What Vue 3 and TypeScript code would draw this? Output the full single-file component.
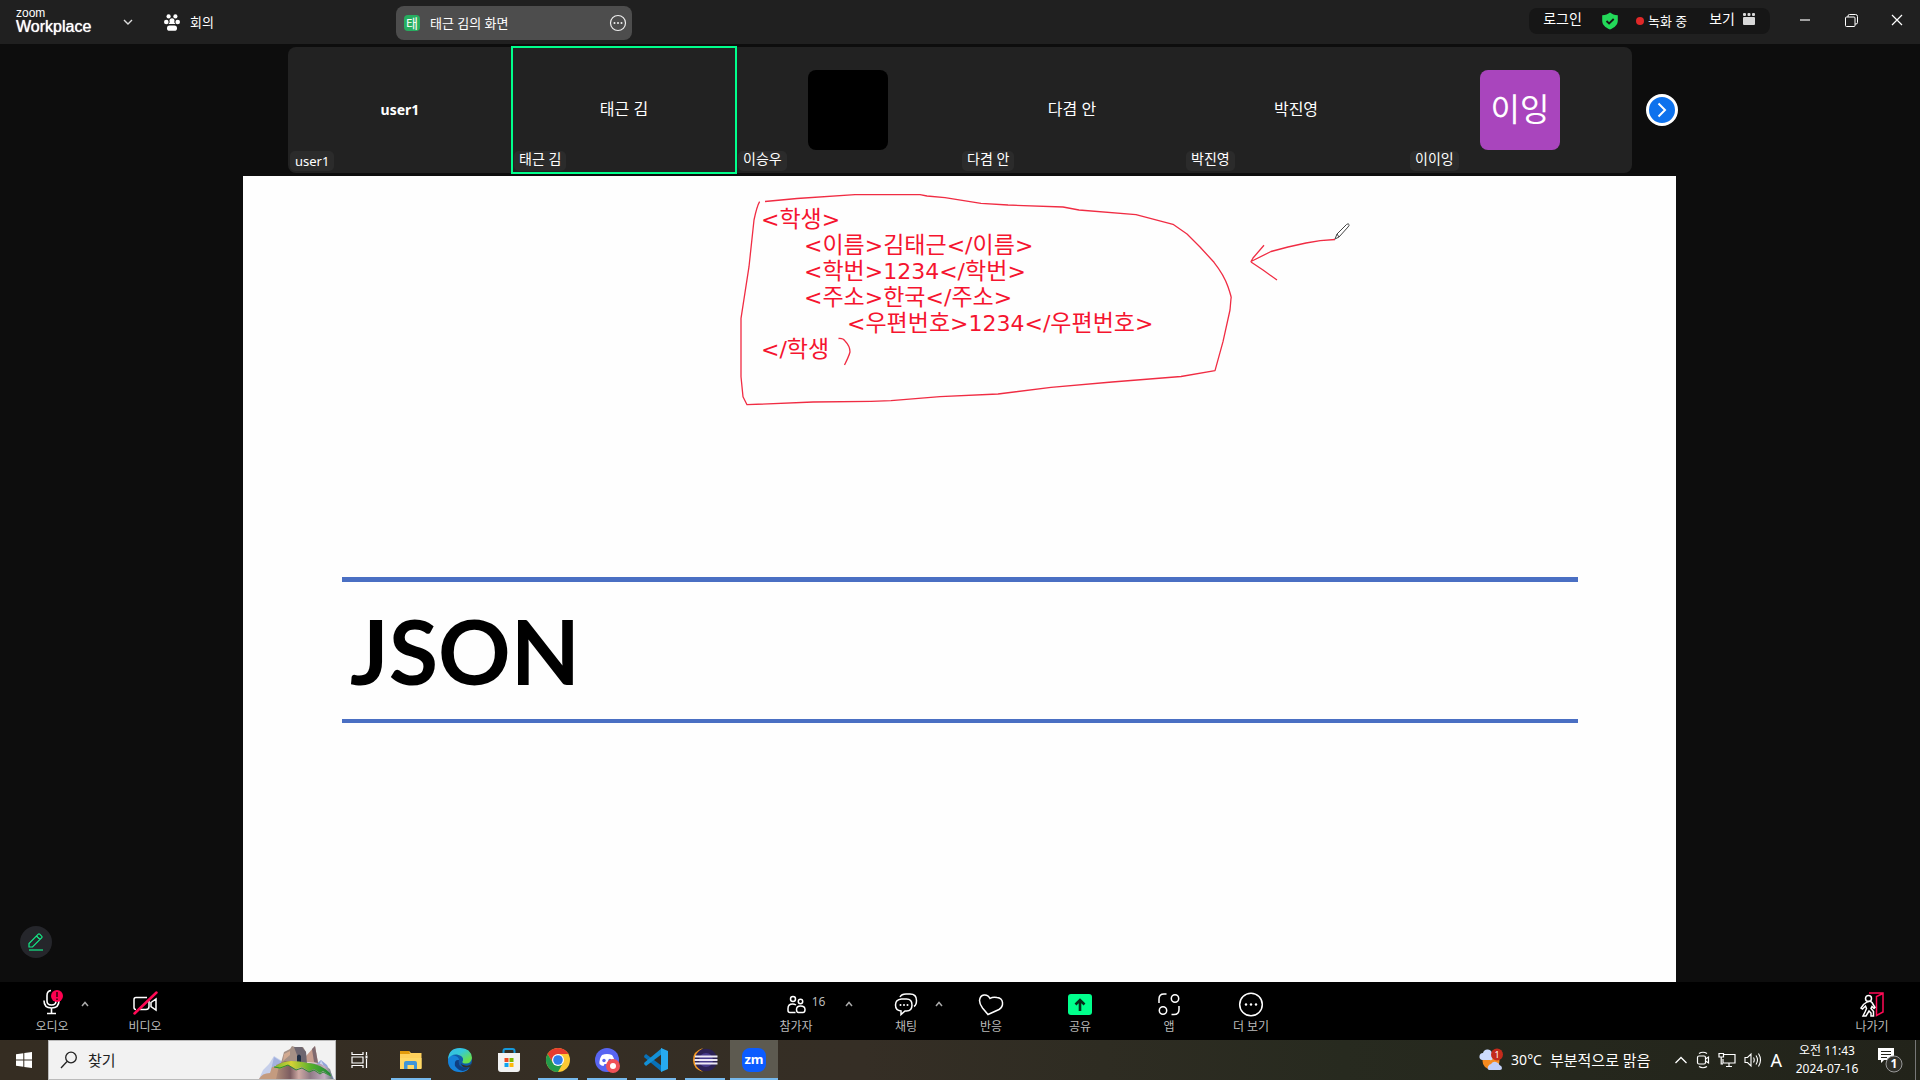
<script setup lang="ts">
interface Participant {
  name: string
  latin?: boolean
  avatar?: 'blank' | 'initials'
  initials?: string
  active?: boolean
}

interface CodeLine {
  depth: number
  text: string
}

const participants: Participant[] = [
  { name: 'user1', latin: true },
  { name: '태근 김', active: true },
  { name: '이승우', avatar: 'blank' },
  { name: '다겸 안' },
  { name: '박진영' },
  { name: '이이잉', avatar: 'initials', initials: '이잉' },
]

const codeLines: CodeLine[] = [
  { depth: 0, text: '<학생>' },
  { depth: 1, text: '<이름>김태근</이름>' },
  { depth: 1, text: '<학번>1234</학번>' },
  { depth: 1, text: '<주소>한국</주소>' },
  { depth: 2, text: '<우편번호>1234</우편번호>' },
  { depth: 0, text: '</학생' },
]

// Hangul runs are set slightly larger than the Latin marks around them.
const runs = (text: string) =>
  (text.match(/[가-힣]+|[^가-힣]+/g) ?? []).map((t) => ({ t, hangul: /[가-힣]/.test(t) }))
</script>

<template>
  <div class="app">
    <header class="titlebar">
      <div class="brand">
        <span class="brand-small">zoom</span>
        <span class="brand-big">Workplace</span>
      </div>
      <button class="brand-menu" aria-label="메뉴">
        <svg width="10" height="8" viewBox="0 0 10 8"><path d="M1 2l4 4 4-4" fill="none" stroke="#ddd" stroke-width="1.4" /></svg>
      </button>
      <div class="meeting">
        <svg width="16" height="17" viewBox="0 0 16 17" fill="#fff">
          <circle cx="4.600" cy="2.400" r="2.100" /><circle cx="11.400" cy="2.400" r="2.100" />
          <circle cx="2.300" cy="8" r="2.300" /><circle cx="13.700" cy="8" r="2.300" />
          <circle cx="8" cy="6.800" r="2.500" /><path d="M4.500 10h7l-1.500-2h-4z" />
          <rect x="3" y="11.500" width="10" height="5.300" rx="2.600" />
        </svg>
        <span>회의</span>
      </div>
      <div class="share-tab">
        <span class="tab-badge">태</span>
        <span class="tab-title">태근 김의 화면</span>
        <button aria-label="옵션">
          <svg width="18" height="18" viewBox="0 0 18 18"><circle cx="9" cy="9" r="7.500" fill="none" stroke="#eee" stroke-width="1.200" /><g fill="#eee"><circle cx="5.500" cy="9" r="1" /><circle cx="9" cy="9" r="1" /><circle cx="12.500" cy="9" r="1" /></g></svg>
        </button>
      </div>
      <div class="status">
        <button class="login">로그인</button>
        <svg class="shield" width="16" height="18" viewBox="0 0 16 18"><path d="M8 0.500c2 1.700 4.500 2.600 7.800 2.700v5.300c0 4.300-3 7-7.800 9-4.800-2-7.800-4.700-7.800-9V3.200C3.500 3.100 6 2.200 8 .5z" fill="#23d959" /><path d="M4.500 9l2.600 2.500L11.700 7" fill="none" stroke="#161616" stroke-width="1.800" /></svg>
        <span class="recording"><i class="dot"></i>녹화 중</span>
        <button class="view">보기
          <svg width="12" height="12" viewBox="0 0 12 12" fill="#d8d8d8"><rect x="0" y="0" width="3" height="3" rx="1" /><rect x="4.500" y="0" width="3" height="3" rx="1" /><rect x="9" y="0" width="3" height="3" rx="1" /><rect x="0" y="4" width="12" height="8" rx="1" /></svg>
        </button>
      </div>
      <div class="window-controls">
        <button aria-label="최소화"><svg width="12" height="12" viewBox="0 0 12 12"><path d="M1 6h10" stroke="#ccc" stroke-width="1.500" /></svg></button>
        <button aria-label="이전 크기로"><svg width="13" height="13" viewBox="0 0 13 13" fill="none" stroke="#fff"><path d="M3 3V2q0-1.500 1.500-1.500h6q2 0 2 2v6q0 1.500-1.500 1.500h-1" /><rect x="0.500" y="3" width="9.500" height="9.500" rx="1" /></svg></button>
        <button aria-label="닫기"><svg width="12" height="12" viewBox="0 0 12 12"><path d="M1 1l10 10M11 1L1 11" stroke="#fff" stroke-width="1.200" /></svg></button>
      </div>
    </header>

    <section class="gallery">
      <ul class="strip">
        <li v-for="p in participants" :key="p.name" class="tile" :class="{ active: p.active, latin: p.latin }">
          <span v-if="p.avatar" class="avatar" :class="p.avatar">{{ p.initials }}</span>
          <span v-else class="tile-name">{{ p.name }}</span>
          <span class="tile-label">{{ p.name }}</span>
        </li>
      </ul>
      <button class="next" aria-label="다음">
        <svg width="10" height="16" viewBox="0 0 10 16"><path d="M1.500 1.500L8 8l-6.500 6.500" fill="none" stroke="#fff" stroke-width="2" /></svg>
      </button>
    </section>

    <main class="stage">
      <button class="annotate" aria-label="주석">
        <svg width="16" height="18" viewBox="0 0 16 18" fill="none" stroke="#15e987" stroke-width="1.200"><path d="M1 17h14" /><path d="M1 14v-3.500L10.300 1.200q.7-.7 1.400 0l2.100 2.100q.7.700 0 1.400L4.500 14zM8.500 3l3.500 3.500" /></svg>
      </button>
      <div class="slide">
        <div class="code">
          <div v-for="(line, i) in codeLines" :key="i" class="code-line" :class="'depth-' + line.depth"><span v-for="(r, j) in runs(line.text)" :key="j" :class="{ hangul: r.hangul }">{{ r.t }}</span></div>
        </div>
        <h1 class="title">JSON</h1>
        <svg class="ink" width="1433" height="806" viewBox="0 0 1433 806" fill="none" stroke="#f02c43" stroke-width="1.300" stroke-linejoin="round">
          <path d="M522 25.500L554 22.500 612 18.700H677L684 20 702 21.700 738 27.300 765 29 820 31 836 34 893 38.700 930 48.300 944 58 957 71 971 86.300Q981 99 985 110.700T988 122.500L987 134 980 165.700 972 194.700 938 200.500 869 206 808 211.300 755 218 697 220.700 648 224.700 628 225.300 570 226 504 228.700 500 220.700 498 200.700V142.300L506 90.700 511 44Q514 30 516.600 25.700" />
          <path d="M1092 63.500Q1077 64 1063 67L1045 71 1028 75.500 1008 85.500 1010 82 1021 69.300M1008 86L1020 94 1034 104" />
          <path d="M595.500 162.500Q600 162 602 165 607 170 607 176 606 180 601.500 189" />
          <g stroke="#444" stroke-width="1"><path d="M1092 63l2-5 9.500-9.500q2-1.500 2.500 0 .5 1-1 2.500L1096 61zM1094 58l2 3" fill="#fff" /></g>
        </svg>
      </div>
    </main>

    <nav class="toolbar">
      <div class="tools-left">
        <button class="tool">
          <svg width="24" height="26" viewBox="0 0 24 26" fill="none" stroke="#fff" stroke-width="1.600"><path d="M11 1.500q-4 .5-4 5V12q0 4 4.500 4t4.500-4v-1M4 11.500q0 7.500 7.500 7.500t7.500-7.500M11.500 19v5M7 24.500h9" /><circle cx="17" cy="7" r="6" fill="#ff0050" stroke="none" /><path d="M17 3v5M17 9.500v1.500" stroke="#40000f" /></svg>
          <span>오디오</span>
        </button>
        <button class="caret" aria-label="오디오 옵션"><svg width="8" height="6" viewBox="0 0 8 6"><path d="M1 5l3-3.500L7 5" fill="none" stroke="#aaa" stroke-width="1.500" /></svg></button>
        <button class="tool video">
          <svg width="26" height="26" viewBox="0 0 26 26" fill="none" stroke="#fff" stroke-width="1.500"><path d="M15 8.500H4q-2 0-2 2v8q0 2 2 2M8 20.500h6q3 0 3-3V12M19 13.500l5-3.500v11l-5-3.500z" /><path d="M2.500 24.500L24.500 3.500" stroke="#ff0a55" stroke-width="2.500" stroke-linecap="round" /></svg>
          <span>비디오</span>
        </button>
      </div>
      <div class="tools-center">
        <button class="tool people">
          <span class="with-count">
            <svg width="19" height="26" viewBox="0 0 19 26" fill="none" stroke="#fff" stroke-width="1.500"><circle cx="6" cy="8" r="2.500" /><circle cx="13.500" cy="10.500" r="2.200" /><path d="M8.500 21.500H3q-2 0-2-2v-2q0-4.500 4.500-4.500 2 0 3.500 1M13.500 15q-4 0-4 3.500 0 3 2 3h4.500q2 0 2-3Q18 15 13.500 15z" /></svg>
            <small>16</small>
          </span>
          <span>참가자</span>
        </button>
        <button class="caret after-people" aria-label="참가자 옵션"><svg width="8" height="6" viewBox="0 0 8 6"><path d="M1 5l3-3.500L7 5" fill="none" stroke="#aaa" stroke-width="1.500" /></svg></button>
        <button class="tool">
          <svg width="24" height="26" viewBox="0 0 24 26" fill="none" stroke="#fff" stroke-width="1.500"><path d="M6 6q1.500-3 6-3h4q6.500 0 6.500 6.500 0 4.500-2.500 6" /><path d="M7.500 8h5q5.500 0 5.500 6t-5.500 6H11l-4 3.500V20Q1.500 19.500 1.500 14t6-6z" /><g fill="#fff" stroke="none"><circle cx="6.500" cy="14" r="1" /><circle cx="10" cy="14" r="1" /><circle cx="13.500" cy="14" r="1" /></g></svg>
          <span>채팅</span>
        </button>
        <button class="caret after-chat" aria-label="채팅 옵션"><svg width="8" height="6" viewBox="0 0 8 6"><path d="M1 5l3-3.500L7 5" fill="none" stroke="#aaa" stroke-width="1.500" /></svg></button>
        <button class="tool">
          <svg width="26" height="26" viewBox="0 0 26 26" fill="none" stroke="#fff" stroke-width="1.500"><path d="M12 7.500Q10 3.500 6 4T1.500 9.500q0 3.500 3 7.500L10 23.500l11-5Q25 16 24.500 11.500T19 6.500Q15 5.500 12 7.500z" /></svg>
          <span>반응</span>
        </button>
        <button class="tool wide-gap">
          <svg width="26" height="26" viewBox="0 0 26 26"><rect x="1" y="3" width="24" height="21" rx="3" fill="#00ff8c" /><path d="M13 20v-11M8.500 13.500L13 9l4.500 4.500" fill="none" stroke="#062a18" stroke-width="2.600" /></svg>
          <span>공유</span>
        </button>
        <button class="tool wide-gap">
          <svg width="26" height="26" viewBox="0 0 26 26" fill="none" stroke="#fff" stroke-width="1.500"><circle cx="19" cy="7.500" r="3.700" /><circle cx="7" cy="19.500" r="3.700" /><path d="M3 12V8q0-5 5-5h2.500M15.500 23.500H18q5 0 5-5v-3.500" /></svg>
          <span>앱</span>
        </button>
        <button class="tool more">
          <svg width="26" height="26" viewBox="0 0 26 26"><circle cx="13" cy="13.500" r="11.300" fill="none" stroke="#fff" stroke-width="1.500" /><g fill="#fff"><circle cx="8" cy="13.500" r="1.200" /><circle cx="13" cy="13.500" r="1.200" /><circle cx="18" cy="13.500" r="1.200" /></g></svg>
          <span>더 보기</span>
        </button>
      </div>
      <div class="tools-right">
        <button class="tool">
          <svg width="26" height="26" viewBox="0 0 26 26" fill="none" stroke="#fff" stroke-width="1.500"><path d="M10 2h14v19l-6.500 3.500V5.500L24 2.500" stroke="#ff0a55" /><circle cx="9.500" cy="7.500" r="3" fill="#000" /><path d="M8 11l-3.500 2.500L2 17l1.500 1 3-3 1 2.500-1.500 3.500L4 25h3l3-5 2 2v3h2.500v-4.500l-2.500-3 1-2 2 2 1-1-3-5q-2-2-5-.5z" /></svg>
          <span>나가기</span>
        </button>
      </div>
    </nav>

    <footer class="taskbar">
      <button class="start" aria-label="시작"><svg width="16" height="16" viewBox="0 0 16 16" fill="#fff"><path d="M0 2.200L7.300 1.200v6.300H0zM8.300 1L16 0v7.500H8.300zM0 8.500h7.300v6.300L0 13.800zM8.300 8.500H16V16l-7.700-1z" /></svg></button>
      <label class="search">
        <svg class="lens" width="18" height="18" viewBox="0 0 18 18" fill="none" stroke="#222" stroke-width="1.300"><circle cx="11" cy="6.500" r="5.300" /><path d="M7 10.500L1 17" /></svg>
        <input type="text" placeholder="찾기" aria-label="찾기" />
        <svg class="castle" width="78" height="34" viewBox="0 2 78 34">
          <defs>
            <linearGradient id="rock" x1="0" y1="0" x2="1" y2="0"><stop offset="0" stop-color="#b08c78" /><stop offset="0.250" stop-color="#7b5c60" /><stop offset="0.400" stop-color="#cfaaa4" /><stop offset="0.600" stop-color="#8f7a86" /><stop offset="0.850" stop-color="#c3aec0" /><stop offset="1" stop-color="#667a7c" /></linearGradient>
            <linearGradient id="grass" x1="0" y1="0" x2="1" y2="0"><stop offset="0" stop-color="#71b82e" /><stop offset="0.300" stop-color="#d6d236" /><stop offset="0.650" stop-color="#55b02c" /><stop offset="1" stop-color="#1d873a" /></linearGradient>
          </defs>
          <path d="M2 36l4-9 6-6 5-8 8 5v18z" fill="#c6cfea" /><path d="M17 14l8 5-2 10-9-2z" fill="#a3b2de" />
          <path d="M58 22l6-5 6 5 4 8 3 6H58z" fill="#94a5da" /><path d="M64 17l-3 11 5 6 3-6z" fill="#ccd5f0" />
          <path d="M47 19l2-6 9-10 3 17z" fill="#c79d8e" /><path d="M55 6l3-3 3 17-4-1z" fill="#806a70" />
          <path d="M24 20l3-11 6-3 2-3 3 1 8 0 3 5 1 14-16 1z" fill="#a69186" /><path d="M37 4l8 0 4 5 1 13-8-1-2-9z" fill="#6e6670" /><path d="M27 11l6-3v4l-7 6z" fill="#d2aa91" />
          <path d="M40 20v-7q2-3 4 0v7z" fill="#1d2c42" />
          <path d="M19 36V22l9-4 36 3 9 5 3 10z" fill="url(#rock)" />
          <path d="M2 36q3-6 11-6l2-6 7-1-3 13z" fill="#c49b7f" />
          <path d="M17 24q9-6 17-6t17 2q13 1 22 10l1 3-8-5-3 2-6-4-5 2-7-4-6 2-8-4-8 4z" fill="url(#grass)" />
          <path d="M17 24l6 1 8-3 8 5 6-2 7 4 5-2 6 4 3-2 8 4" fill="none" stroke="#2f8a35" />
        </svg>
      </label>
      <button class="task-view" aria-label="작업 보기"><svg width="18" height="16" viewBox="0 0 18 16" fill="none" stroke="#fff" stroke-width="1.200"><path d="M1 0v2.500h11V0M1 16v-2.500h11V16M1 5h11v6H1zM15.500 0v3M15.500 7v9" /><rect x="14.500" y="3.500" width="2" height="3" fill="#fff" stroke="none" /></svg></button>
      <div class="apps">
        <button class="app-icon open" aria-label="파일 탐색기"><svg width="24" height="24" viewBox="0 0 24 24"><path d="M1 3h9l2 2h10.500v15H1z" fill="#ffd15c" /><path d="M1 3h9l1 3H1z" fill="#e39b0b" /><path d="M1 10h21.500v11H1z" fill="#ffd966" /><path d="M5 21v-6q0-2 2-2h9q2 0 2 2v6h-3v-4H8.500v4z" fill="#3f96d8" /></svg></button>
        <button class="app-icon" aria-label="엣지"><svg width="26" height="26" viewBox="0 0 26 26"><defs><linearGradient id="edge" x1="0" y1="0" x2="1" y2="1"><stop offset="0" stop-color="#36b9ea" /><stop offset="0.400" stop-color="#35c9d8" /><stop offset="0.800" stop-color="#67df50" /></linearGradient></defs><circle cx="13" cy="13" r="12" fill="#0f5caa" /><path d="M1 13Q1 7 7 8.500q5 1 5 4.500-3 4 1 7.500 4 3 9.500 0Q19 26 12 25 1 24 1 13z" fill="#1681d8" /><path d="M12 13q-2 9 10.500 7.500Q15 28 8 19q-1-7 4-6z" fill="#103e80" /><path d="M24 17q-2 2.500-6 1.500-3-.5-4-2 1 4 5 4 3 0 4.500-1z" fill="#352e25" /><path d="M1 12Q2 1 13 1q11 0 12 10-1 6-7 5.500-4-.5-2-3Q17 9 10 7.500 4 7 1 12z" fill="url(#edge)" /></svg></button>
        <button class="app-icon" aria-label="스토어"><svg width="26" height="26" viewBox="0 0 26 26"><path d="M7.500 7V4q0-2 2-2h7q2 0 2 2v3" fill="none" stroke="#1599dc" stroke-width="2" /><path d="M2 6h22v16q0 3-3 3H5q-3 0-3-3z" fill="#f2f2f2" /><path d="M8.500 11h4v4h-4z" fill="#ef4a23" /><path d="M13.500 11h4v4h-4z" fill="#7eb900" /><path d="M8.500 16h4v4h-4z" fill="#10a3ee" /><path d="M13.500 16h4v4h-4z" fill="#fdb80b" /></svg></button>
        <button class="app-icon open" aria-label="크롬"><svg width="26" height="26" viewBox="0 0 26 26"><circle cx="13" cy="13" r="12" fill="#fcc934" /><path d="M2.600 7A12 12 0 0 1 23.400 7H13L8 16z" fill="#e63b2e" /><path d="M2.600 7A12 12 0 0 0 13 25l5-9-10 0z" fill="#239a4b" /><circle cx="13" cy="13" r="6" fill="#fff" /><circle cx="13" cy="13" r="4.800" fill="#2f7de9" /></svg></button>
        <button class="app-icon open" aria-label="디스코드"><svg width="26" height="26" viewBox="0 0 26 26"><circle cx="13" cy="13" r="12" fill="#5865f2" /><path d="M8 8q5-2 10 0 3 4 2.500 9-2 2-4 2l-1-2h-5l-1 2q-2 0-4-2Q5 12 8 8z" fill="#fff" /><circle cx="10" cy="13.500" r="1.700" fill="#5865f2" /><circle cx="16" cy="13.500" r="1.700" fill="#5865f2" /><circle cx="19" cy="19" r="7" fill="#ef5158" /><circle cx="19" cy="19" r="3" fill="#fff" /></svg></button>
        <button class="app-icon open" aria-label="코드 편집기"><svg width="26" height="26" viewBox="0 0 26 26"><path d="M1 9l2-2 16 12v6L1.500 10.500z" fill="#0871b8" /><path d="M1 17l2 2L19 7V1L1.500 15.500z" fill="#1390d6" /><path d="M18 1l7 3v18l-7 3z" fill="#27aaf0" /></svg></button>
        <button class="app-icon open" aria-label="이클립스"><svg width="26" height="26" viewBox="0 0 26 26"><path d="M11 1Q1 4 1 13t10 12Q4 19 4 13T11 1z" fill="#f59a23" /><circle cx="14" cy="13" r="11.300" fill="#2c2255" /><circle cx="14" cy="13" r="7" fill="#473b8b" /><path d="M3 9.500h22.500M2.500 13h23M3 16.500h22.500" stroke="#eee9f5" stroke-width="1.800" /></svg></button>
        <button class="app-icon open current" aria-label="줌"><span class="zm">zm</span></button>
      </div>
      <div class="tray">
        <button class="weather">
          <svg width="24" height="24" viewBox="0 0 24 24"><circle cx="12" cy="13" r="8.500" fill="#f58a1f" /><path d="M3 12q-3-1-2.500-4T4 5q1-4 5-3.500T13 6q2 1 1 4t-3 2z" fill="#cddcff" /><path d="M10 22q-2-1-1-3.500T12 16q2-3 5-2t3.500 3q2.500 1 2.500 3t-2 2z" fill="#c2d0f7" /><circle cx="18" cy="6.500" r="6" fill="#c42b1c" /><text x="18" y="10" text-anchor="middle" font-size="9" fill="#fff" font-family="Noto Sans">1</text></svg>
          <span class="degrees">30°C</span><span>부분적으로 맑음</span>
        </button>
        <button aria-label="숨겨진 아이콘"><svg width="14" height="10" viewBox="0 0 14 10"><path d="M1.500 8L7 2.500 12.500 8" fill="none" stroke="#fff" stroke-width="1.300" /></svg></button>
        <button aria-label="카메라"><svg width="14" height="18" viewBox="0 0 14 18" fill="none" stroke="#fff" stroke-width="1.200"><path d="M3 2.500q4-2.500 8 0M3 15.500q4 2.500 8 0" /><rect x="1.500" y="5" width="8" height="8" rx="1.500" /><path d="M9.500 8l3-2v6l-3-2" /></svg></button>
        <button aria-label="네트워크"><svg width="18" height="16" viewBox="0 0 18 16" fill="none" stroke="#fff" stroke-width="1.200"><path d="M6 2.500h11v8.500H5V7M8 14.500h6M11 11v3.500M1 1.500h4.500V5H1zM3.200 5v7H5" /></svg></button>
        <button aria-label="볼륨"><svg width="18" height="16" viewBox="0 0 18 16" fill="none" stroke="#fff" stroke-width="1.100"><path d="M1 5.500h2.500L7 2v12l-3.500-3.500H1zM9.500 5.500q1.500 2.500 0 5M12 3.500q3 4.500 0 9M14.500 1.500q4 6.500 0 13" /></svg></button>
        <button class="ime">A</button>
        <button class="clock"><span>오전 11:43</span><span>2024-07-16</span></button>
        <button class="notice" aria-label="알림">
          <svg width="26" height="28" viewBox="0 0 26 28"><path d="M1 2h16v12H7l-3 3v-3H1z" fill="#fff" /><path d="M4 5.500h10M4 8.500h10M4 11.500h6" stroke="#24241b" stroke-width="1.200" /><circle cx="17" cy="18" r="8" fill="#30302a" stroke="#999" /><text x="17" y="22" text-anchor="middle" font-size="12" font-weight="700" fill="#fff" font-family="Noto Sans">1</text></svg>
        </button>
        <span class="desktop-edge"></span>
      </div>
    </footer>
  </div>
</template>

<style>
body {
  margin: 0;
  background: #0d0d0d;
}
</style>

<style scoped>
.app {
  display: flex;
  flex-direction: column;
  min-height: 100vh;
  overflow: hidden;
  background: #0d0d0d;
  color: #fff;
  font-family: "Noto Sans", "Noto Sans CJK KR", sans-serif;
  font-size: 13px;
  line-height: 16px;
}
button {
  padding: 0;
  border: 0;
  background: none;
  color: inherit;
  font: inherit;
}
svg {
  display: block;
  flex: none;
}

.titlebar {
  display: flex;
  align-items: center;
  height: 44px;
  background: #202020;
}
.brand {
  display: flex;
  flex-direction: column;
  width: 80px;
  margin-left: 16px;
  font-family: "Liberation Sans", sans-serif;
}
.brand-small {
  font-size: 12px;
  line-height: 10px;
}
.brand-big {
  font-size: 16px;
  line-height: 18px;
  text-shadow: 0 0 1px #fff;
}
.brand-menu {
  margin-left: 27px;
}
.meeting {
  display: flex;
  align-items: center;
  gap: 10px;
  margin-left: 31px;
}
.share-tab {
  display: flex;
  align-items: center;
  box-sizing: border-box;
  width: 236px;
  height: 34px;
  margin: 2px 0 0 182px;
  padding: 0 5px 0 8px;
  border-radius: 8px;
  background: #4d4d4d;
}
.tab-badge {
  width: 16px;
  margin-right: 10px;
  border-radius: 4px;
  background: #27ae60;
  text-align: center;
}
.tab-title {
  flex: 1;
}
.status {
  display: flex;
  align-items: center;
  box-sizing: border-box;
  width: 241px;
  height: 26px;
  margin: 0 28px 2px auto;
  padding: 0 15px 0 14px;
  border-radius: 8px;
  background: #161616;
}
.login {
  width: 39px;
  white-space: nowrap;
}
.login,
.view {
  padding-bottom: 4px;
  font-size: 14px;
}
.shield {
  margin-left: 20px;
}
.recording {
  display: flex;
  align-items: center;
  gap: 4px;
  margin-left: 18px;
  white-space: nowrap;
}
.dot {
  width: 8px;
  height: 8px;
  border-radius: 50%;
  background: #e02828;
}
.view {
  display: flex;
  align-items: center;
  gap: 8px;
  margin-left: auto;
  white-space: nowrap;
}
.window-controls {
  display: flex;
  padding-bottom: 4px;
}
.window-controls button {
  display: flex;
  align-items: center;
  justify-content: center;
  width: 46px;
}
.window-controls button:first-child {
  margin-left: -16px;
}

.gallery {
  display: flex;
  align-items: center;
  padding: 3px 242px 3px 288px;
}
.strip {
  display: flex;
  flex: 1;
  height: 126px;
  margin: 0 14px 0 0;
  padding: 0;
  border-radius: 8px;
  background: #222;
  list-style: none;
}
.tile {
  position: relative;
  display: flex;
  flex: 1;
  align-items: center;
  justify-content: center;
}
.tile.active {
  outline: 2px solid #00ff8c;
  outline-offset: -1px;
}
.tile-name {
  padding-bottom: 2px;
  font-size: 16px;
}
.latin .tile-name {
  padding: 0;
  font-size: 14px;
  font-weight: 700;
}
.tile-label {
  position: absolute;
  bottom: 2px;
  left: 2px;
  padding: 0 5px 4px;
  border-radius: 5px;
  background: #2b2b2b;
  font-size: 14px;
}
.latin .tile-label {
  padding: 2px 5px;
  font-size: 13px;
}
.avatar {
  width: 80px;
  height: 80px;
  border-radius: 8px;
  font-size: 32px;
  line-height: 78px;
  text-align: center;
}
.blank {
  background: #000;
}
.initials {
  background: #a945bd;
}
.next {
  display: flex;
  align-items: center;
  justify-content: center;
  width: 32px;
  height: 32px;
  border: 3px solid #fff;
  border-radius: 50%;
  background: #0e72ed;
}

.stage {
  position: relative;
  display: flex;
  flex: 1;
  padding: 0 244px 0 243px;
}
.annotate {
  position: absolute;
  bottom: 24px;
  left: 20px;
  display: flex;
  align-items: center;
  justify-content: center;
  width: 32px;
  height: 32px;
  border-radius: 50%;
  background: #25262b;
}
.slide {
  position: relative;
  flex: 1;
  min-width: 0;
  background: #fefefe;
}
.code {
  padding: 30px 0 0 518px;
  color: #f5142f;
  font-family: "DejaVu Sans", "Noto Sans CJK KR", sans-serif;
  font-size: 22px;
  line-height: 26px;
}
.code-line {
  height: 26px;
  white-space: nowrap;
}
.depth-1 {
  padding-left: 43px;
}
.depth-2 {
  padding-left: 86px;
}
.hangul {
  font-size: 23px;
}
.title {
  margin: 215px 98px 0 99px;
  padding: 0 0 0 8px;
  border-top: 5px solid #4a6fc3;
  border-bottom: 4px solid #4a6fc3;
  color: #000;
  font-family: Lato, sans-serif;
  font-size: 90px;
  font-weight: 700;
  line-height: 137px;
}
.ink {
  position: absolute;
  top: 0;
  left: 0;
}

.toolbar {
  display: flex;
  justify-content: space-between;
  height: 58px;
  background: #000;
  color: #bbb;
  font-size: 12px;
}
.tools-left,
.tools-center,
.tools-right {
  display: flex;
}
.tools-left {
  padding: 0 20px 0 28px;
}
.tools-right {
  padding-right: 24px;
}
.tool {
  display: flex;
  flex-direction: column;
  align-items: center;
  width: 48px;
  padding-top: 9px;
  gap: 2px;
  white-space: nowrap;
}
.tools-left .tool {
  padding-top: 7px;
  gap: 4px;
}
.tool.people {
  width: 68px;
}
.with-count {
  display: flex;
  gap: 6px;
  padding-left: 20px;
}
.with-count small {
  padding-top: 3px;
  font-size: 12px;
}
.caret {
  display: flex;
  justify-content: center;
  width: 18px;
  padding-top: 19px;
}
.tool.video {
  margin-left: 27px;
}
.after-people {
  margin: 0 24px 0 10px;
}
.after-chat {
  margin-right: 19px;
}
.wide-gap {
  margin-left: 41px;
}
.more {
  margin-left: 34px;
}

.taskbar {
  display: flex;
  height: 40px;
  background: linear-gradient(90deg, #352d22, #352e25 45%, #272a1f 70%, #22231a);
}
.taskbar button {
  display: flex;
  align-items: center;
  justify-content: center;
}
.taskbar .start {
  width: 48px;
}
.search {
  display: flex;
  align-items: center;
  box-sizing: border-box;
  width: 288px;
  padding-left: 11px;
  border: 1px solid #bbb;
  background: #f2f2f2;
}
.search input {
  flex: 1;
  min-width: 0;
  margin-left: 10px;
  padding: 0;
  border: 0;
  outline: 0;
  background: none;
  color: #222;
  font: inherit;
  font-size: 15px;
}
.search input::placeholder {
  color: #222;
  opacity: 1;
}
.castle {
  align-self: flex-end;
}
.taskbar .task-view {
  width: 48px;
}
.apps {
  display: flex;
  gap: 1px;
  margin-left: 3px;
}
.app-icon {
  position: relative;
  width: 48px;
}
.app-icon.open::after {
  position: absolute;
  right: 4px;
  bottom: 0;
  left: 4px;
  height: 2px;
  background: #76b9ed;
  content: "";
}
.app-icon.current {
  background: #5d5a50;
}
.app-icon.current::after {
  right: 0;
  left: 0;
}
.zm {
  width: 24px;
  height: 24px;
  border-radius: 8px;
  background: #0b5cff;
  font-size: 13px;
  font-weight: 700;
  line-height: 22px;
}
.tray {
  display: flex;
  align-items: center;
  gap: 8px;
  margin-left: auto;
}
.taskbar .weather {
  gap: 8px;
  margin-right: 16px;
  font-size: 15px;
  white-space: nowrap;
}
.degrees {
  font-size: 14px;
}
.ime {
  font-size: 18px;
}
.taskbar .clock {
  flex-direction: column;
  width: 70px;
  gap: 2px;
  margin-left: 2px;
  font-size: 12px;
  white-space: nowrap;
}
.notice {
  margin: 0 4px 0 7px;
}
.desktop-edge {
  align-self: stretch;
  width: 1px;
  margin-right: 4px;
  background: #777;
}
</style>
